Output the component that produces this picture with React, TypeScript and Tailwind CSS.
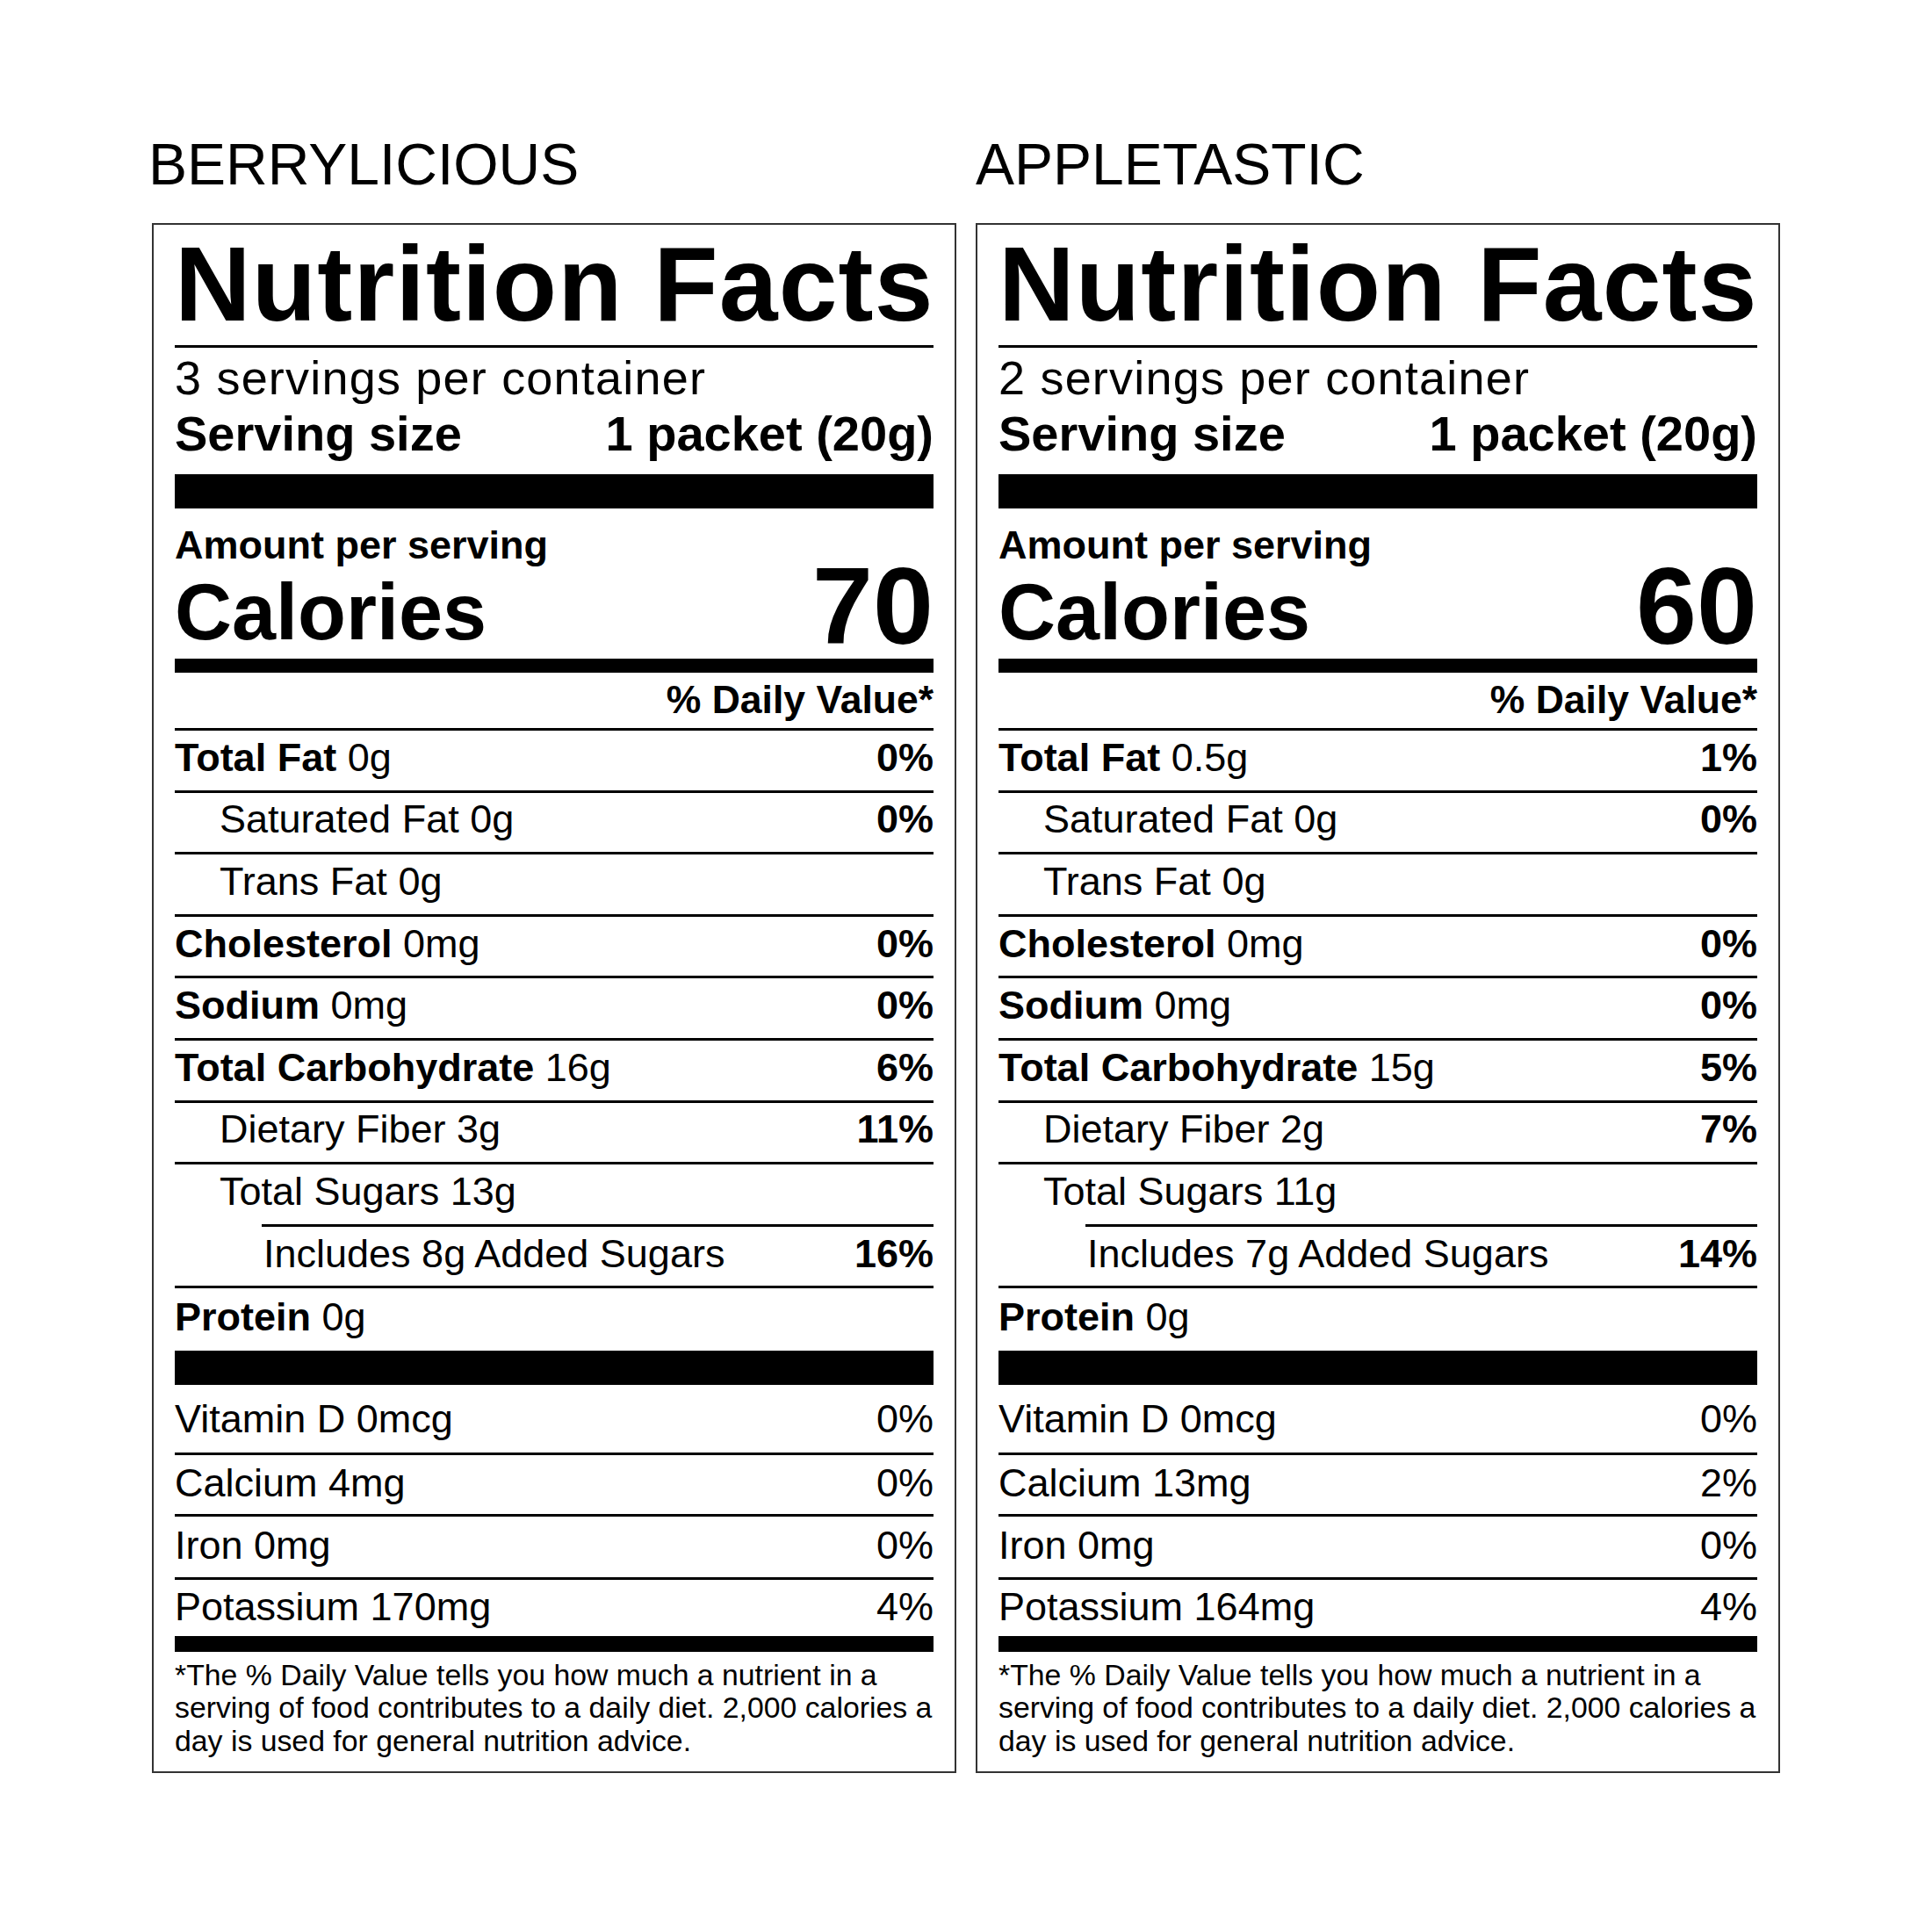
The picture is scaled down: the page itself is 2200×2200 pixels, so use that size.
import React from "react";

type Nutrient = {
  label: string;
  value: string;
  bold?: boolean;
  indent: 0 | 1 | 2;
  dv?: string;
};

type PanelProps = {
  name: string;
  titleClass: string;
  servings: string;
  calories: string;
  nutrients: Nutrient[];
  protein: string;
  vitamins: { label: string; dv: string }[];
};

function NutrientRow({ n }: { n: Nutrient }) {
  const rowBase =
    "h-[70.6px] border-t-[3px] border-black flex items-center justify-between pb-[6px] whitespace-nowrap text-[45px] leading-[50px]";
  const label = n.bold ? (
    <span>
      <span className="font-bold">{n.label}</span> {n.value}
    </span>
  ) : (
    <span>
      {n.label} {n.value}
    </span>
  );
  if (n.indent === 2) {
    return (
      <div className={`${rowBase} ml-[99px]`}>
        <div className="pl-[2px]">{label}</div>
        <span className="font-bold">{n.dv}</span>
      </div>
    );
  }
  return (
    <div className={rowBase}>
      <div className={n.indent === 1 ? "pl-[51px]" : ""}>{label}</div>
      {n.dv ? <span className="font-bold">{n.dv}</span> : null}
    </div>
  );
}

function Panel({ name, titleClass, servings, calories, nutrients, protein, vitamins }: PanelProps) {
  const vitHeights = [
    "h-[77px] pt-[2px]",
    "h-[70px] border-t-[3px] pb-[3px]",
    "h-[72px] border-t-[3px] pb-[3px]",
    "h-[67px] border-t-[3px] pb-[2px]",
  ];
  return (
    <div className="w-[916px] flex flex-col">
      <div className={`text-[66px] leading-[76px] mb-[29px] whitespace-nowrap ${titleClass}`}>{name}</div>
      <div className="border-2 border-[#333333] px-[24px] pt-[7px] pb-[16px] flex flex-col">
        <div className="text-[120px] leading-[120px] font-bold tracking-[1.2px] whitespace-nowrap">
          Nutrition Facts
        </div>
        <div className="mt-[10px] h-[3px] bg-black" />
        <div className="mt-[6px] h-[56px] text-[54px] leading-[56px] tracking-[1.2px] whitespace-nowrap">
          {servings} servings per container
        </div>
        <div className="mt-[9px] h-[54px] text-[56px] leading-[54px] font-bold flex justify-between whitespace-nowrap">
          <span>Serving size</span>
          <span>1 packet (20g)</span>
        </div>
        <div className="mt-[19px] h-[39px] bg-black" />
        <div className="mt-[18px] h-[48px] text-[45px] leading-[48px] font-bold whitespace-nowrap">
          Amount per serving
        </div>
        <div className="h-[90px] flex justify-between items-end font-bold whitespace-nowrap">
          <span className="text-[90px] leading-[75px]">Calories</span>
          <span className="text-[124px] leading-[90px]">{calories}</span>
        </div>
        <div className="mt-[15px] h-[16px] bg-black" />
        <div className="mt-[7px] h-[48px] text-[44.5px] leading-[48px] font-bold text-right whitespace-nowrap">
          % Daily Value*
        </div>
        <div className="mt-[8px] flex flex-col">
          {nutrients.map((n, i) => (
            <NutrientRow key={i} n={n} />
          ))}
          <div className="h-[73.6px] border-t-[3px] border-black flex items-center pb-[6px] whitespace-nowrap text-[45px] leading-[50px]">
            <span>
              <span className="font-bold">Protein</span> {protein}
            </span>
          </div>
        </div>
        <div className="h-[39px] bg-black" />
        <div className="flex flex-col">
          {vitamins.map((v, i) => (
            <div
              key={i}
              className={`${vitHeights[i]} border-black flex items-center justify-between whitespace-nowrap text-[45px] leading-[50px]`}
            >
              <span>{v.label}</span>
              <span>{v.dv}</span>
            </div>
          ))}
        </div>
        <div className="h-[18px] bg-black" />
        <div className="mt-[7.6px] text-[33.8px] leading-[37.5px] whitespace-nowrap">
          <div>*The % Daily Value tells you how much a nutrient in a</div>
          <div>serving of food contributes to a daily diet. 2,000 calories a</div>
          <div>day is used for general nutrition advice.</div>
        </div>
      </div>
    </div>
  );
}

export default function App() {
  const berry: PanelProps = {
    name: "BERRYLICIOUS",
    titleClass: "ml-[-4px]",
    servings: "3",
    calories: "70",
    nutrients: [
      { label: "Total Fat", value: "0g", bold: true, indent: 0, dv: "0%" },
      { label: "Saturated Fat", value: "0g", indent: 1, dv: "0%" },
      { label: "Trans Fat", value: "0g", indent: 1 },
      { label: "Cholesterol", value: "0mg", bold: true, indent: 0, dv: "0%" },
      { label: "Sodium", value: "0mg", bold: true, indent: 0, dv: "0%" },
      { label: "Total Carbohydrate", value: "16g", bold: true, indent: 0, dv: "6%" },
      { label: "Dietary Fiber", value: "3g", indent: 1, dv: "11%" },
      { label: "Total Sugars", value: "13g", indent: 1 },
      { label: "Includes 8g", value: "Added Sugars", indent: 2, dv: "16%" },
    ],
    protein: "0g",
    vitamins: [
      { label: "Vitamin D 0mcg", dv: "0%" },
      { label: "Calcium 4mg", dv: "0%" },
      { label: "Iron 0mg", dv: "0%" },
      { label: "Potassium 170mg", dv: "4%" },
    ],
  };
  const apple: PanelProps = {
    name: "APPLETASTIC",
    titleClass: "",
    servings: "2",
    calories: "60",
    nutrients: [
      { label: "Total Fat", value: "0.5g", bold: true, indent: 0, dv: "1%" },
      { label: "Saturated Fat", value: "0g", indent: 1, dv: "0%" },
      { label: "Trans Fat", value: "0g", indent: 1 },
      { label: "Cholesterol", value: "0mg", bold: true, indent: 0, dv: "0%" },
      { label: "Sodium", value: "0mg", bold: true, indent: 0, dv: "0%" },
      { label: "Total Carbohydrate", value: "15g", bold: true, indent: 0, dv: "5%" },
      { label: "Dietary Fiber", value: "2g", indent: 1, dv: "7%" },
      { label: "Total Sugars", value: "11g", indent: 1 },
      { label: "Includes 7g", value: "Added Sugars", indent: 2, dv: "14%" },
    ],
    protein: "0g",
    vitamins: [
      { label: "Vitamin D 0mcg", dv: "0%" },
      { label: "Calcium 13mg", dv: "2%" },
      { label: "Iron 0mg", dv: "0%" },
      { label: "Potassium 164mg", dv: "4%" },
    ],
  };
  return (
    <div className="w-[2200px] h-[2200px] bg-white text-black font-['Liberation_Sans',Arial,sans-serif] flex justify-center items-start gap-[22px] pt-[149px]">
      <Panel {...berry} />
      <Panel {...apple} />
    </div>
  );
}
